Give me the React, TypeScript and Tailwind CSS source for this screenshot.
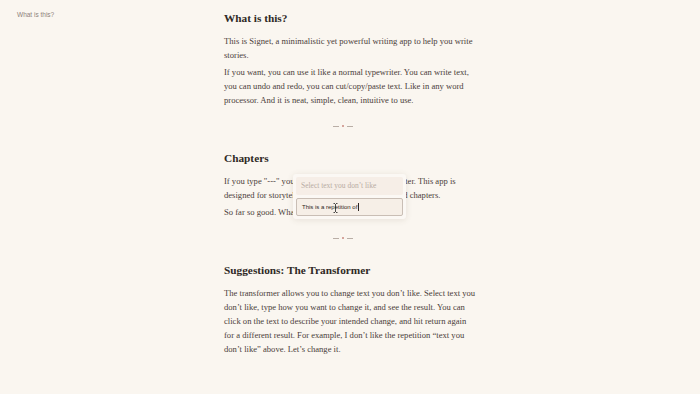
import React from "react";

const serif = { fontFamily: '"Liberation Serif", "DejaVu Serif", serif' };
const sans = { fontFamily: '"Liberation Sans", Arial, sans-serif' };

function Sep() {
  return (
    <div className="mt-[12px] flex h-[14px] items-center justify-center gap-[3px] pr-[14px]">
      <span className="h-px w-[6px] bg-[#b9aea6]" />
      <span className="h-[2px] w-[2px] rounded-full bg-[#c98a80]" />
      <span className="h-px w-[6px] bg-[#b9aea6]" />
    </div>
  );
}

function H({ children, first }: { children: React.ReactNode; first?: boolean }) {
  return (
    <h2
      className={`${first ? "" : "mt-[17px]"} h-[16px] text-[11.3px] font-bold leading-[16px] text-[#2f2925]`}
      style={serif}
    >
      {children}
    </h2>
  );
}

function P({ lines, first }: { lines: string[]; first?: boolean }) {
  return (
    <p className={`${first ? "mt-[8px]" : "mt-[3px]"} text-[8.6px] leading-[14px] text-[#4a403a]`} style={serif}>
      {lines.map((l, i) => (
        <span key={i} className="block whitespace-nowrap">
          {l}
        </span>
      ))}
    </p>
  );
}

export default function App() {
  return (
    <div className="relative h-[394px] w-[700px] overflow-hidden bg-[#faf6f0]">
      <div className="flex">
        <div className="w-[224px] shrink-0 pl-[17px] pt-[10px]">
          <div className="text-[6.5px] leading-[9px] text-[#8d817a]" style={sans}>
            What is this?
          </div>
        </div>
        <div className="w-[252px] pt-[10px]">
          <H first>What is this?</H>
          <P
            first
            lines={["This is Signet, a minimalistic yet powerful writing app to help you write", "stories."]}
          />
          <P
            lines={[
              "If you want, you can use it like a normal typewriter. You can write text,",
              "you can undo and redo, you can cut/copy/paste text. Like in any word",
              "processor. And it is neat, simple, clean, intuitive to use.",
            ]}
          />
          <Sep />
          <H>Chapters</H>
          <P
            first
            lines={[
              "If you type \"---\" you will instantly create a new chapter. This app is",
              "designed for storytellers, so it is natively built around chapters.",
            ]}
          />
          <P lines={["So far so good. What else can it do?"]} />
          <Sep />
          <H>Suggestions: The Transformer</H>
          <P
            first
            lines={[
              "The transformer allows you to change text you don\u2019t like. Select text you",
              "don\u2019t like, type how you want to change it, and see the result. You can",
              "click on the text to describe your intended change, and hit return again",
              "for a different result. For example, I don\u2019t like the repetition \u201ctext you",
              "don\u2019t like\u201d above. Let\u2019s change it.",
            ]}
          />
        </div>
      </div>

      <div className="absolute left-[293px] top-[174px] flex w-[113px] flex-col gap-[3px] rounded-[3px] bg-[#fbf8f4] p-[3px] shadow-[0_1px_6px_rgba(90,70,50,0.12)]">
        <div className="flex h-[18px] items-center rounded-[2px] bg-[#f6eee7] pl-[5px]">
          <span className="whitespace-nowrap text-[7.5px] text-[#b8aca3]" style={serif}>
            Select text you don{"\u2019"}t like
          </span>
        </div>
        <div className="relative flex h-[18px] items-center rounded-[2px] border border-[#c9beb5] bg-[#f6efe7] pl-[5px]">
          <span className="whitespace-nowrap text-[6px] text-[#2f2622]" style={sans}>
            This is a repetition of
          </span>
          <span className="ml-[1px] h-[8px] w-px bg-[#2f2622]" />
          <svg className="absolute left-[36px] top-[4px]" width="5" height="10" viewBox="0 0 5 10">
            <path d="M0.5 0.5h1.5M3 0.5h1.5M2.5 1v8M0.5 9.5h1.5M3 9.5h1.5" stroke="#222" strokeWidth="0.8" fill="none" />
          </svg>
        </div>
      </div>
    </div>
  );
}
